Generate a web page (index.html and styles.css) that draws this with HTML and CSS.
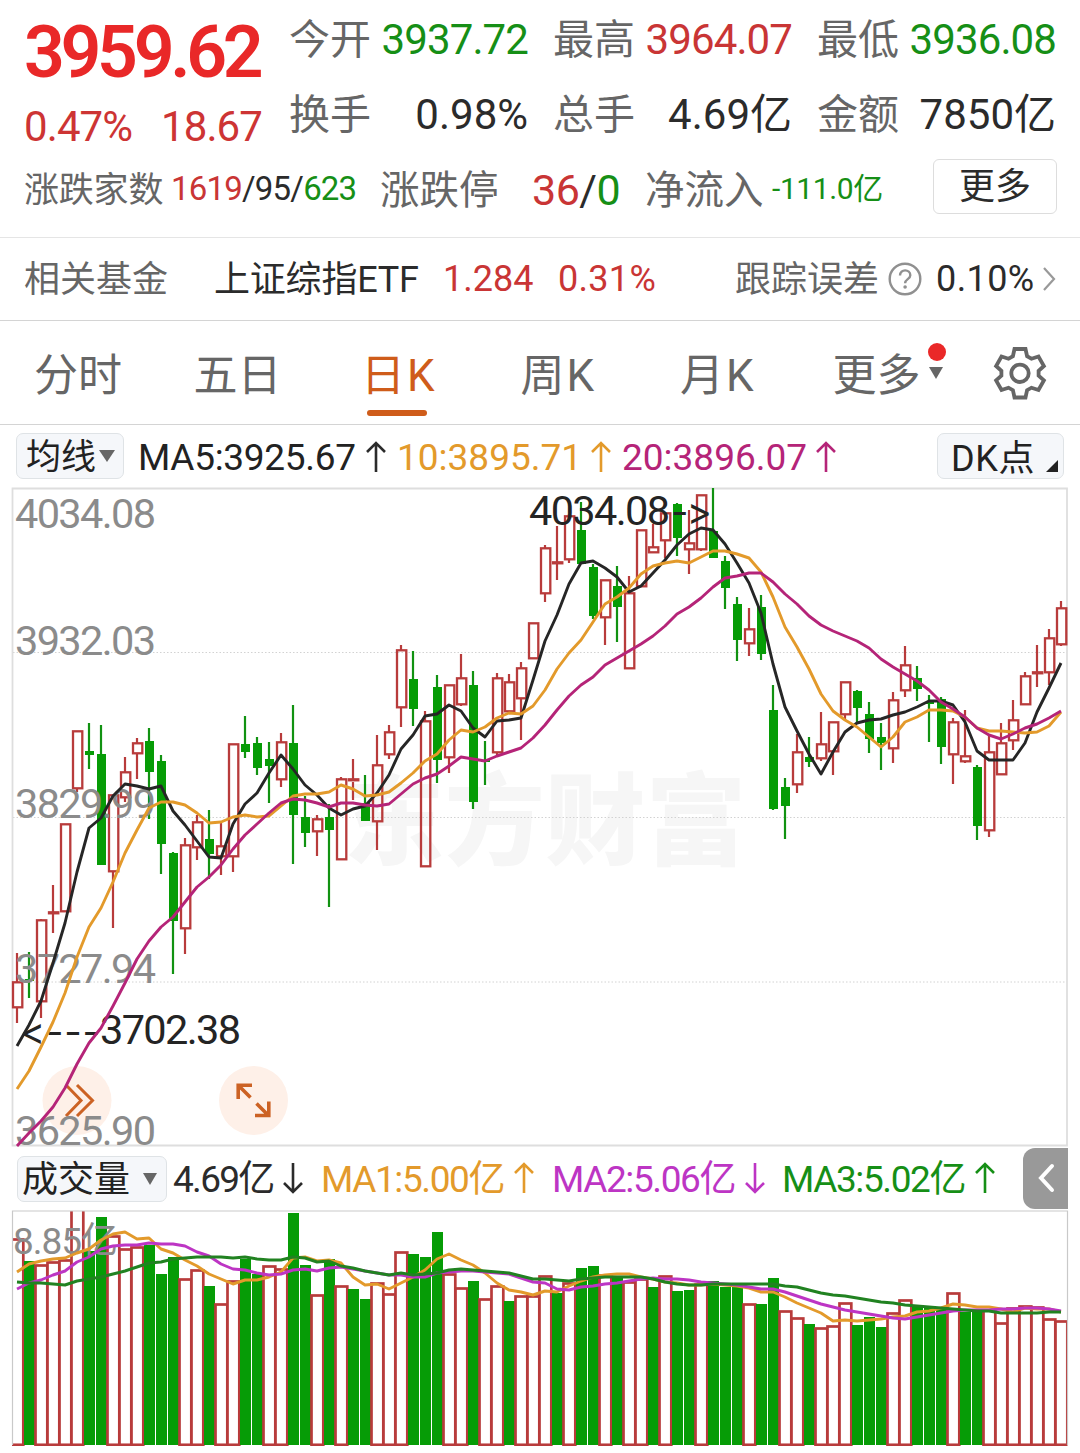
FILE: index.html
```
<!DOCTYPE html>
<html lang="zh-CN">
<head>
<meta charset="utf-8">
<title>上证指数 日K</title>
<link rel="stylesheet" href="styles.css">
</head>
<body>
<svg class="defs" width="0" height="0">
  <symbol id="up" viewBox="0 0 22 32"><path d="M11 31V2M2 11 11 2l9 9" fill="none" stroke="currentColor" stroke-width="2.6"/></symbol>
  <symbol id="down" viewBox="0 0 22 32"><path d="M11 1v29M2 21l9 9 9-9" fill="none" stroke="currentColor" stroke-width="2.6"/></symbol>
</svg>

<header class="quote">
  <div class="summary">
    <div class="price-block">
      <div class="price">3959.62</div>
      <div class="change"><span>0.47%</span><span>18.67</span></div>
    </div>
    <div class="stats">
      <div class="stat"><span class="label">今开</span><span class="down">3937.72</span></div>
      <div class="stat"><span class="label">最高</span><span class="up">3964.07</span></div>
      <div class="stat"><span class="label">最低</span><span class="down">3936.08</span></div>
      <div class="stat"><span class="label">换手</span><span class="loose">0.98%</span></div>
      <div class="stat"><span class="label">总手</span><span class="loose">4.69亿</span></div>
      <div class="stat"><span class="label">金额</span><span class="loose">7850亿</span></div>
    </div>
  </div>
  <div class="breadth">
    <span class="label families">涨跌家数</span>
    <span class="counts"><span class="up">1619</span>/95/<span class="down">623</span></span>
    <span class="label limits">涨跌停</span>
    <span class="limit-counts"><span class="up">36</span>/<span class="down">0</span></span>
    <span class="label flow">净流入</span>
    <span class="flow-value down">-111.0亿</span>
    <button class="more">更多</button>
  </div>
</header>

<section class="fund">
  <span class="label fund-title">相关基金</span>
  <span class="fund-name">上证综指ETF</span>
  <span class="fund-price up">1.284</span>
  <span class="fund-change up">0.31%</span>
  <span class="label track">跟踪误差</span>
  <svg class="help" width="34" height="34" viewBox="0 0 34 34"><circle cx="17" cy="17" r="15.3" fill="none" stroke="#909090" stroke-width="2.4"/><path d="M12 13.5c0-7 10.3-6.600 10.300-.3 0 4-5.200 3.900-5.200 8" fill="none" stroke="#909090" stroke-width="2.400"/><circle cx="17.100" cy="25" r="1.800" fill="#909090"/></svg>
  <span class="track-value">0.10%</span>
  <svg width="14" height="26" viewBox="0 0 14 26"><path d="M2 2l10 11L2 24" fill="none" stroke="#999" stroke-width="2.2"/></svg>
</section>

<nav class="tabs">
  <span class="tab">分时</span>
  <span class="tab">五日</span>
  <span class="tab active">日<b>K</b></span>
  <span class="tab">周<b>K</b></span>
  <span class="tab">月<b>K</b></span>
  <span class="tab tab-more">更多<i class="badge"></i><i class="caret"></i></span>
  <svg class="gear" width="54" height="54" viewBox="0 0 54 54" fill="none" stroke="#666" stroke-width="3.800"><path d="M21.500 3h11l1.600 7.200 4.400 2.600 7-2.300 5.400 9.500-5.300 4.800v4.900l5.300 4.700-5.400 9.600-7-2.300-4.400 2.500-1.600 7.300h-11l-1.600-7.300-4.400-2.500-7 2.300-5.400-9.600 5.300-4.700v-4.900L3.100 20l5.400-9.500 7 2.300 4.400-2.600z"/><circle cx="27" cy="27.300" r="8.700"/></svg>
</nav>

<div class="ma-bar">
  <span class="chip">均线<i class="caret"></i></span>
  <span class="ma ma5">MA5:3925.67</span><svg class="arrow"><use href="#up"/></svg>
  <span class="ma ma10">10:3895.71</span><svg class="arrow amber"><use href="#up"/></svg>
  <span class="ma ma20">20:3896.07</span><svg class="arrow magenta"><use href="#up"/></svg>
  <span class="chip dk">DK点<i class="corner"></i></span>
</div>

<svg class="price-chart" width="1080" height="661" viewBox="0 487 1080 661">
  <text class="watermark" x="344" y="857" textLength="402">东方财富</text>
  <g class="grid"><path d="M13 652.500H1067M13 817.500H1067M13 982H1067"/></g>
  <path class="frame thick" d="M12.500 488.500H1067V1145.500H12.500Z"/>
  <g class="tools">
    <circle cx="77" cy="1100.500" r="34.500"/><circle cx="253.500" cy="1100.500" r="34.500"/>
    <path d="M66 1085l15 15.500-15 15.500M77 1085l15.500 15.500L77 1116"/>
    <path class="expand" d="M252 1085.200H238.200V1099M239 1086l11.500 11.500M255 1115.500h13.800v-14M268 1115l-11.500-11.500"/>
  </g>
  <g id="candles"></g>
  <g class="axis">
    <text x="15" y="528" textLength="141">4034.08</text>
    <text x="15" y="655" textLength="141">3932.03</text>
    <text x="15" y="818" textLength="141">3829.99</text>
    <text x="15" y="983" textLength="141">3727.94</text>
    <text x="15" y="1144.500" textLength="141">3625.90</text>
  </g>
  <g class="marks">
    <text x="529" y="525" textLength="141">4034.08</text><text class="sign" x="671" y="525" textLength="41">-&gt;</text>
    <text class="sign" x="20" y="1045" textLength="80">&lt;---</text><text x="100" y="1043.500" textLength="141">3702.38</text>
  </g>
  <g id="price-lines"></g>
</svg>

<div class="volume-bar">
  <span class="chip volume-chip">成交量<i class="caret"></i></span>
  <span class="vol">4.69亿</span><svg class="arrow"><use href="#down"/></svg>
  <span class="vma vma1">MA1:5.00亿</span><svg class="arrow amber"><use href="#up"/></svg>
  <span class="vma vma2">MA2:5.06亿</span><svg class="arrow violet"><use href="#down"/></svg>
  <span class="vma vma3">MA3:5.02亿</span><svg class="arrow green"><use href="#up"/></svg>
  <span class="collapse"><svg width="18" height="30" viewBox="0 0 18 30"><path d="M15 3 4 15l11 12" fill="none" stroke="#fff" stroke-width="4" stroke-linecap="round"/></svg></span>
</div>

<svg class="volume-chart" width="1080" height="243" viewBox="0 1210 1080 243">
  <defs><clipPath id="plot"><rect x="12" y="1211" width="1055.500" height="235"/></clipPath></defs>
  <g id="bars" clip-path="url(#plot)"></g>
  <path class="frame" d="M12.500 1445V1211H1067.500V1445"/>
  <g class="axis"><text class="small" x="13" y="1254" textLength="105">8.85亿</text></g>
  <g id="volume-lines"></g>
</svg>
<script src="chart.js"></script>
</body>
</html>
```
FILE: styles.css
```
* { box-sizing: border-box; }
body {
  margin: 0;
  width: 1080px;
  height: 1453px;
  overflow: hidden;
  background: #fff;
  color: #2b2b2b;
  font-family: Roboto, "Noto Sans CJK SC", sans-serif;
  font-size: 36px;
}
.defs { position: absolute; }
svg { display: block; flex: none; overflow: visible; }
span { white-space: nowrap; }
.label { color: #666; }
.up { color: #c93535; }
.down { color: #168f16; }

.quote { height: 238px; border-bottom: 1px solid #e5e5e5; }
.summary { display: flex; height: 152px; padding-left: 24px; }
.price-block { width: 265px; padding-top: 15px; }
.price {
  height: 75px;
  line-height: 75px;
  font-size: 71.500px;
  font-weight: 600;
  letter-spacing: -4.300px;
  color: #e92828;
}
.change {
  display: flex;
  justify-content: space-between;
  width: 238px;
  padding-top: 7px;
  line-height: 60px;
  font-size: 42px;
  letter-spacing: -0.900px;
  color: #cd3434;
}
.stats {
  display: grid;
  grid-template-columns: 239px 239px 239px;
  grid-template-rows: 75px 75px;
  column-gap: 25px;
  padding-top: 2px;
}
.stat {
  display: flex;
  justify-content: space-between;
  align-items: baseline;
  line-height: 75px;
  font-size: 42px;
  letter-spacing: -0.900px;
}
.stat .label { font-size: 41px; letter-spacing: 0; }
.stat .loose { letter-spacing: 0; }

.breadth { display: flex; align-items: center; height: 76px; padding-left: 24px; }
.families { width: 147px; padding-bottom: 7px; font-size: 35px; letter-spacing: -0.200px; }
.counts { width: 209px; padding-bottom: 4px; font-size: 33px; letter-spacing: -0.800px; }
.limits { width: 152px; padding-bottom: 7px; font-size: 39.500px; }
.limit-counts { width: 113px; padding-bottom: 1px; font-size: 43px; letter-spacing: -0.500px; }
.flow { width: 127px; padding-bottom: 7px; font-size: 39.500px; }
.flow-value { width: 161px; padding-bottom: 8px; font-size: 30px; letter-spacing: -0.400px; }
.more {
  width: 124px;
  height: 55px;
  margin-bottom: 7px;
  padding: 0;
  border: 1.500px solid #ddd;
  border-radius: 6px;
  background: #fff;
  color: #2b2b2b;
  font: 36px/50px Roboto, "Noto Sans CJK SC", sans-serif;
}

.fund {
  display: flex;
  align-items: center;
  height: 83px;
  padding-left: 24px;
  border-bottom: 1px solid #d4d4d4;
}
.fund-title { width: 190px; padding-bottom: 7px; }
.fund-name { width: 229px; padding-bottom: 6px; letter-spacing: -0.200px; }
.fund-price { width: 115px; }
.fund-change { width: 177px; letter-spacing: 0.300px; }
.track { width: 153px; padding-bottom: 7px; }
.help { margin-right: 14px; }
.track-value { width: 106px; letter-spacing: 0.400px; }

.tabs {
  display: flex;
  align-items: center;
  height: 104px;
  padding-left: 34px;
  border-bottom: 1px solid #d4d4d4;
  color: #666;
  font-size: 44px;
}
.tab { position: relative; width: 159.500px; line-height: 96px; padding-top: 6px; }
.tab b { margin-left: 2px; font-weight: 400; }
.tab.active { color: #cf5c1a; margin-left: 8px; }
.tab.active::after {
  content: "";
  position: absolute;
  left: 6px;
  bottom: 8px;
  width: 60px;
  height: 6px;
  border-radius: 3px;
  background: #cf5c1a;
}
.tab-more { width: 160px; margin-left: -7px; }
.caret {
  display: inline-block;
  border: 8.500px solid transparent;
  border-top: 12px solid #666;
  border-bottom: 0;
}
.tab-more .caret { position: absolute; left: 96px; top: 45px; border-width: 12px 7.500px 0; }
.badge {
  position: absolute;
  left: 95px;
  top: 21px;
  width: 18px;
  height: 18px;
  border-radius: 50%;
  background: #ea2828;
}

.ma-bar { display: flex; align-items: center; height: 62px; padding: 0 16px; font-size: 37px; }
.ma-bar .arrow { margin-top: 2px; }
.ma { padding-top: 2px; }
.chip {
  display: flex;
  align-items: center;
  flex: none;
  width: 108px;
  height: 46px;
  padding: 0 0 6px 9px;
  border: 1.500px solid #dfe3e6;
  border-radius: 7px;
  background: #f5f7fa;
  color: #222;
  font-size: 35px;
}
.chip .caret { margin: 5px 0 0 3px; }
.arrow { width: 22px; height: 32px; }
.ma5 { width: 227px; margin-left: 14px; letter-spacing: -0.300px; color: #222; }
.ma10 { width: 193px; margin-left: 10px; color: #e39a2b; }
.ma20 { width: 193px; margin-left: 10px; color: #b52478; }
.amber { color: #e39a2b; }
.magenta { color: #b52478; }
.violet { color: #bd35c4; }
.green { color: #168f16; }
.dk { position: relative; width: 127px; margin-left: auto; padding: 0 0 3px 13px; font-size: 36px; letter-spacing: 0.600px; }
.corner {
  position: absolute;
  right: 5px;
  bottom: 6px;
  border-left: 12px solid transparent;
  border-bottom: 12px solid #222;
}

.watermark { font: 900 100px "Noto Sans CJK SC", sans-serif; fill: #f6f6f6; }
.grid path { stroke: #d2d2d2; stroke-width: 1; stroke-dasharray: 1.500 2; fill: none; }
.frame { fill: none; stroke: #c9c9c9; stroke-width: 1.200; }
.thick { stroke: #dedede; stroke-width: 1.800; }
.axis text, .marks text { font-size: 41.500px; fill: #8b8b8b; }
.axis .small { font-size: 37px; }
.marks text { fill: #242424; }
.marks .sign { font-family: Inter, sans-serif; font-size: 38px; font-feature-settings: "calt" 0; }
.tools circle { fill: #fef0e8; }
.tools path { fill: none; stroke: #cc6224; stroke-width: 3; }
.tools .expand { stroke-width: 3.600; }
.rise { fill: #fff; stroke: #b83b3b; stroke-width: 2.300; }
#candles .rise { fill: none; }
#candles .doji { fill: #b83b3b; }
#bars .rise { stroke-width: 2.700; }
.fall { fill: #069c06; stroke: none; }
.wick-rise { stroke: #b83b3b; stroke-width: 2.200; }
.wick-fall { stroke: #119211; stroke-width: 2.200; }
.line { fill: none; stroke-width: 2.900; stroke-linejoin: round; }

.volume-bar { display: flex; align-items: center; height: 62px; padding-left: 17px; font-size: 37px; }
.volume-bar .arrow { margin-bottom: 2px; }
.volume-chip { width: 150px; padding-left: 4px; font-size: 36px; }
.volume-chip .caret { margin-left: 13px; border-width: 12px 7.500px 0; }
.vol { width: 109px; margin-left: 6px; padding-bottom: 6px; letter-spacing: -1.700px; }
.vma { width: 192px; padding-bottom: 6px; letter-spacing: -1.400px; }
.vma1 { margin-left: 17px; color: #e39a2b; }
.vma2 { margin-left: 17px; color: #bd35c4; }
.vma3 { margin-left: 16px; color: #168f16; }
.collapse {
  display: flex;
  align-items: center;
  justify-content: center;
  width: 45px;
  height: 61px;
  margin-left: auto;
  margin-right: 12px;
  margin-bottom: 2px;
  border-radius: 12px 0 0 12px;
  background: #999;
}
```
FILE: chart.js
```
const STEP = 12, X0 = 17;

// Each candle: direction, high, body top, body bottom, low.
const candles = `r 953 982 1007 1023|g 952 979 981 998|r 919 920 1001 1018|r 885 912 914 933|r 824 824 911 911|r 731 731 788 792|g 723 751 755 769|g 725 754 865 865
r 795 795 871 928|r 757 772 797 802|r 738 743 753 779|g 728 741 772 819|g 755 761 844 874|g 852 853 921 974|r 838 845 928 954|r 815 822 847 860
g 810 839 854 879|r 823 846 856 875|r 744 744 856 872|g 716 744 752 758|g 737 743 768 775|g 742 759 766 803|r 733 742 779 787|g 705 743 815 864
g 796 817 833 847|r 815 819 831 856|g 804 817 830 907|r 777 779 859 859|r 759 779 782 800|g 775 803 821 821|r 735 765 821 850|r 725 732 754 759
r 645 650 707 727|g 651 679 709 726|r 711 721 866 866|g 675 687 760 783|r 685 685 757 773|r 654 678 704 706|g 671 685 802 809|g 741 760 762 785
r 673 678 752 755|r 674 682 711 711|r 662 668 698 740|r 623 623 658 658|r 545 548 593 602|r 526 562 564 580|r 514 516 559 563|g 502 530 564 564
g 564 567 616 619|r 580 580 617 645|g 566 586 607 642|r 576 593 668 668|r 530 530 586 586|r 524 547 552 552|r 513 513 540 558|g 503 504 538 556
r 510 543 549 574|r 495 495 549 551|g 488 531 558 558|g 556 561 588 609|g 597 604 640 661|r 608 629 643 656|g 595 607 654 660|g 685 710 809 810
g 778 787 806 839|r 734 752 784 793|g 737 757 762 767|r 712 744 758 761|r 722 722 751 775|r 682 682 714 719|g 690 691 708 723|g 702 714 739 753
g 723 737 743 770|r 692 700 748 763|r 646 665 690 697|g 666 678 689 701|g 695 702 704 742|g 697 699 747 764|r 718 722 754 784|r 710 756 761 763
g 765 767 826 840|r 735 752 830 837|r 723 743 774 775|r 700 720 740 750|r 672 676 704 704|r 645 672 674 687|r 629 638 672 685|r 601 608 644 646`
  .split(/[|\n]/).map(row => row.trim().split(' '));

// Each bar: direction and top edge.
const volumes = `r1239 g1261 r1265 r1262 r1260 r1207 g1251 g1217 r1236 r1249 r1247 g1245 g1274 g1257 r1279 r1270 g1286 r1304 r1281 g1259 g1274 r1266
r1269 g1213 g1265 r1295 g1259 r1286 g1289 g1299 r1283 r1294 r1252 g1254 g1257 g1232 r1274 r1288 g1281 r1299 r1286 g1301 r1296 r1296
r1276 g1293 r1283 g1268 g1266 r1275 g1277 r1282 r1279 g1287 r1276 g1291 g1290 r1284 g1281 g1287 g1287 r1304 g1304 g1278 r1311 r1318
g1324 r1328 r1326 r1303 g1325 g1317 g1327 r1313 r1300 g1305 g1308 g1309 r1293 g1312 g1309 r1310 r1323 r1308 r1306 r1307 r1319 r1321`.split(/\s+/);

const priceLines = {
  '#262626': [1046,1025,1001,963,923,872,828,818,796,784,786,789,786,811,825,841,857,858,824,804,793,773,755,769,785,795,808,815,809,806,793,775,749,735,716,714,705,711,728,737,721,720,718,680,641,615,584,563,561,568,577,592,586,573,560,545,534,528,530,544,563,583,613,664,707,731,754,774,752,732,723,720,719,715,712,707,701,701,705,722,751,760,760,760,743,712,688,663],
  '#e39a2b': [1089,1071,1047,1022,993,957,927,908,882,853,830,808,802,802,805,813,823,822,817,815,817,816,806,796,794,794,792,785,789,796,795,792,783,773,761,754,740,730,732,727,718,713,714,706,690,669,653,640,622,604,597,588,574,566,563,561,563,557,551,551,554,558,572,597,627,647,669,694,711,720,727,737,747,737,722,717,710,710,711,717,728,731,731,732,733,732,726,712],
  '#b52478': [1146,1133,1121,1107,1088,1064,1043,1028,1006,983,959,941,927,917,902,887,877,865,849,835,824,813,803,799,800,803,807,803,803,805,806,804,794,784,778,774,766,757,759,761,756,752,748,738,725,710,696,685,677,665,658,651,644,636,626,614,607,598,587,578,576,573,573,582,594,604,616,625,631,636,641,648,659,667,674,681,690,702,709,717,728,735,739,734,728,724,718,711]
};
const volumeLines = {
  '#e39a2b': [1272,1264,1261,1259,1258,1253,1249,1240,1234,1232,1239,1238,1249,1253,1260,1266,1274,1279,1284,1280,1280,1277,1272,1258,1257,1261,1260,1263,1277,1285,1284,1289,1283,1277,1270,1259,1254,1260,1265,1273,1283,1290,1292,1295,1291,1292,1286,1281,1277,1275,1274,1274,1277,1279,1282,1283,1285,1285,1284,1285,1286,1288,1292,1292,1297,1303,1308,1313,1321,1320,1321,1320,1319,1317,1316,1312,1311,1308,1304,1305,1307,1307,1309,1312,1308,1309,1309,1312],
  '#bd35c4': [1289,1283,1280,1275,1271,1262,1257,1249,1246,1245,1245,1243,1244,1244,1246,1252,1256,1264,1269,1270,1273,1275,1274,1270,1269,1271,1268,1267,1269,1271,1273,1275,1275,1277,1277,1273,1272,1271,1271,1272,1273,1274,1278,1282,1283,1289,1290,1287,1286,1284,1283,1281,1279,1278,1279,1279,1280,1282,1283,1284,1285,1287,1289,1289,1292,1296,1300,1304,1307,1310,1312,1314,1316,1318,1319,1317,1315,1313,1311,1310,1310,1310,1309,1309,1308,1308,1309,1311],
  '#218221': [1282,1283,1283,1284,1285,1281,1279,1277,1274,1271,1267,1263,1262,1259,1258,1257,1257,1257,1258,1257,1259,1260,1260,1257,1258,1262,1261,1266,1268,1271,1273,1275,1273,1275,1274,1273,1270,1269,1270,1271,1272,1273,1276,1279,1279,1280,1281,1279,1278,1277,1277,1277,1277,1279,1282,1284,1285,1285,1284,1284,1284,1284,1284,1284,1286,1287,1290,1293,1295,1296,1298,1300,1302,1303,1305,1306,1307,1308,1309,1310,1311,1311,1313,1313,1313,1313,1312,1312]
};

const xAt = i => X0 + i * STEP;

document.getElementById('candles').innerHTML = candles.map(([dir, ...v], i) => {
  const [high, top, bottom, low] = v.map(Number);
  const x = xAt(i), up = dir === 'r', h = bottom - top;
  const wick = `<path class="wick-${up ? 'rise' : 'fall'}" d="M${x} ${high}V${top}M${x} ${bottom}V${low}"/>`;
  const body = up
    ? `<rect class="rise${h < 4 ? ' doji' : ''}" x="${x - 4}" y="${top + .3}" width="9.300" height="${h < 4 ? 1 : h}"/>`
    : `<rect class="fall" x="${x - 4}" y="${top}" width="9" height="${h}"/>`;
  return wick + body;
}).join('');

document.getElementById('bars').innerHTML = volumes.map((entry, i) => {
  const x = xAt(i), y = +entry.slice(1);
  return entry[0] === 'r'
    ? `<rect class="rise" x="${x - 5.500}" y="${y + .5}" width="11.800" height="${1444.300 - y}"/>`
    : `<rect class="fall" x="${x - 5}" y="${y}" width="11" height="${1445 - y}"/>`;
}).join('');

const drawLines = (id, lines) => {
  document.getElementById(id).innerHTML = Object.entries(lines).map(([color, ys]) =>
    `<polyline class="line" stroke="${color}" points="${ys.map((y, i) => xAt(i) + ',' + y).join(' ')}"/>`).join('');
};
drawLines('price-lines', priceLines);
drawLines('volume-lines', volumeLines);
```
